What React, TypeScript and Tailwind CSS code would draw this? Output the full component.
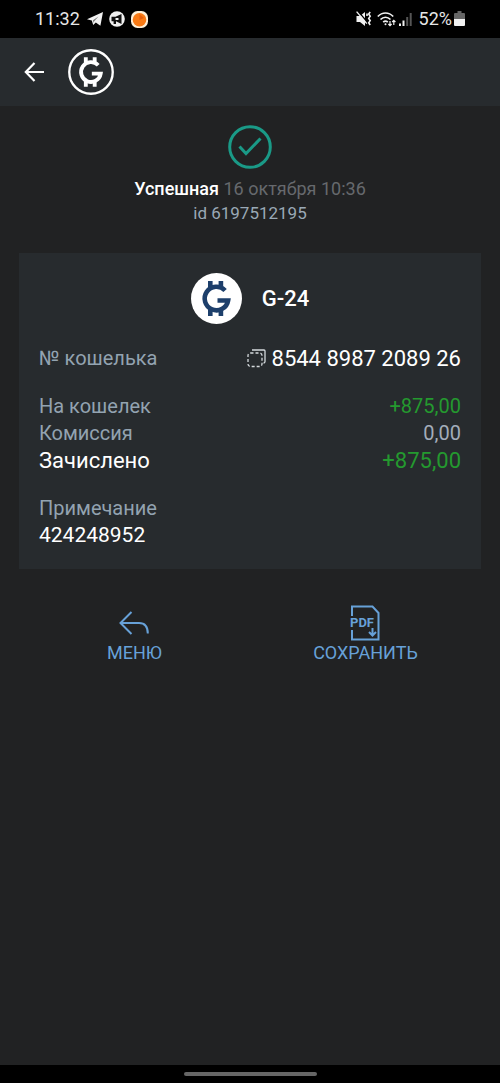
import type { ReactNode } from "react";

type Row = {
  label: string;
  value: string;
  labelClass: string;
  valueClass: string;
};

const AMOUNT_ROWS: Row[] = [
  {
    label: "На кошелек",
    value: "+875,00",
    labelClass: "text-xl/[27px] text-[#93a3b1]",
    valueClass: "text-xl/[27px] text-[#24992f]",
  },
  {
    label: "Комиссия",
    value: "0,00",
    labelClass: "text-xl/[27px] text-[#93a3b1]",
    valueClass: "text-xl/[27px] text-[#a3adba]",
  },
  {
    label: "Зачислено",
    value: "+875,00",
    labelClass: "text-[22px]/[27px] text-white",
    valueClass: "text-[22px]/[27px] text-[#24992f]",
  },
];

function BrandMark() {
  return (
    <g>
      <path
        d="M8.6 -8 A11.8 11.8 0 1 0 11.6 2 H1"
        fill="none"
        stroke="currentColor"
        strokeWidth="4.6"
      />
      <path
        d="M-8.500 -17.500h4.600v4.500h6v-4.500h4.600v7h-15.200z M-8.500 17.500h4.600v-4.500h6v4.500h4.600v-7h-15.200z"
        fill="currentColor"
      />
    </g>
  );
}

function StatusBar() {
  return (
    <div className="flex h-[38px] items-center justify-between bg-black px-[35px] text-lg text-[#e6e6e6]">
      <div className="flex items-center">
        <span>11:32</span>
        <svg className="ml-[7px] h-4 w-[17px]" viewBox="0 0 17 16" aria-hidden="true">
          <path d="M0 8.200 16 1l-2.600 13.800-4.600-3.200-2.600 2.500-1.400-4.500z" fill="#f1f1f1" />
          <path d="M6 9.300 11.500 5.500 7.200 10.200 6.500 12z" fill="#777" />
        </svg>
        <svg className="ml-[5px] size-4" viewBox="0 0 16 16" aria-hidden="true">
          <circle cx="8" cy="8" r="7.800" fill="#f1f1f1" />
          <path d="M2.500 5.800h4L12.500 3v10L7 10.300V13H4.600v-2.700H2.500z" fill="#111" />
          <path d="M6.500 7h3v2h-3z" fill="#f1f1f1" />
        </svg>
        <svg className="ml-[6px] size-[17px]" viewBox="0 0 17 17" aria-hidden="true">
          <rect width="17" height="17" rx="6.500" fill="#fff0d8" />
          <circle cx="8.500" cy="8.700" r="6.800" fill="#f97a14" />
          <path d="M8.500 3.200 13 7 8.500 9z" fill="#e65f0c" />
        </svg>
      </div>

      <div className="flex items-center">
        <svg className="size-4" viewBox="0 0 16 16" fill="none" stroke="#f1f1f1" aria-hidden="true">
          <path d="M.5 5H4l5-4v14L4 11H.5z" fill="#f1f1f1" stroke="none" />
          <path d="M1.800 0 11 10.800" stroke="#000" strokeWidth="1.400" />
          <path d="M.6.600 10.800 12.600" strokeWidth="1.400" />
          <path
            d="M11 2.500v2.500M14.200 1l-1.500 2 1.500 2.200-1.500 2.200 1.500 2.200-1.500 2.200 1.500 2.200"
            strokeWidth="1.600"
          />
        </svg>
        <svg
          className="ml-[5px] h-4 w-[19px]"
          viewBox="0 0 19 16"
          fill="none"
          stroke="#f1f1f1"
          strokeWidth="1.700"
          aria-hidden="true"
        >
          <path d="M.8 5.500c4.400-4.700 11-4.700 15.400 0M3.500 8.500c2.900-3 7.100-3 10 0M6.200 11.200c1.400-1.400 3.200-1.400 4.600 0" />
          <circle cx="8.500" cy="13.200" r="1" fill="#f1f1f1" stroke="none" />
          <path
            d="M13 10v4.500M11.400 13l1.600 1.700 1.600-1.700M16.800 14V9.500M15.200 11l1.600-1.700 1.600 1.700"
            strokeWidth="1.200"
          />
        </svg>
        <svg className="ml-[3px] h-4 w-[13px]" viewBox="0 0 13 16" aria-hidden="true">
          <path d="M0 12.500h2V15H0zM3.500 9.500h2V15h-2z" fill="#f1f1f1" />
          <path d="M7.200 6h2v9h-2zM10.700 2h2v13h-2z" fill="#555" />
        </svg>
        <span className="ml-[7px]">52%</span>
        <svg className="ml-[2px] h-4 w-[11px]" viewBox="0 0 11 16" aria-hidden="true">
          <path d="M3.500 0h4v2H10a1 1 0 0 1 1 1v5H0V3a1 1 0 0 1 1-1h2.500z" fill="#666" />
          <path d="M0 8h11v6a1 1 0 0 1-1 1H1a1 1 0 0 1-1-1z" fill="#f1f1f1" />
        </svg>
      </div>
    </div>
  );
}

function ActionButton({ label, children }: { label: string; children: ReactNode }) {
  return (
    <button type="button" className="flex flex-col items-center text-lg/6 text-[#67a1d8]">
      {children}
      <span>{label}</span>
    </button>
  );
}

export default function App() {
  return (
    <div className="flex min-h-screen flex-col bg-[#212223] font-[Roboto,sans-serif] text-white">
      <StatusBar />

      <header className="flex h-[68px] items-center bg-[#272b2e] pl-6">
        <button type="button" aria-label="Назад">
          <svg
            className="size-5"
            viewBox="0 0 20 20"
            fill="none"
            stroke="currentColor"
            strokeWidth="2.200"
            aria-hidden="true"
          >
            <path d="M20 10H1.800M10.500 1 1.800 10l8.700 9" />
          </svg>
        </button>
        <svg className="ml-6 size-[46px]" viewBox="-27.500 -27.500 55 55" aria-hidden="true">
          <circle r="26" fill="none" stroke="currentColor" strokeWidth="2.800" />
          <BrandMark />
        </svg>
      </header>

      <main className="flex-1 px-[19px] pt-[19px]">
        <section className="flex flex-col items-center">
          <svg
            className="size-11"
            viewBox="0 0 44 44"
            fill="none"
            stroke="#1a9a87"
            strokeWidth="3"
            aria-hidden="true"
          >
            <circle cx="22" cy="22" r="20.300" />
            <path d="m11.500 21.500 6.500 7L32.500 13.500" />
          </svg>
          <p className="mt-2 text-lg/6 text-[#66696d]">
            <span className="font-medium text-white">Успешная</span> 16 октября 10:36
          </p>
          <p className="text-[17px]/6 text-[#9aa9b6]">id 6197512195</p>
        </section>

        <section className="mt-7 bg-[#272b2e] p-5">
          <div className="flex items-center justify-center gap-5">
            <svg
              className="size-[51px] text-[#1d3f6b]"
              viewBox="-25.500 -25.500 51 51"
              aria-hidden="true"
            >
              <circle r="25.500" fill="#fff" />
              <BrandMark />
            </svg>
            <h1 className="text-[22px]/[27px] font-medium">G-24</h1>
          </div>

          <dl className="mt-[21px] flex items-center justify-between">
            <dt className="text-xl/[27px] text-[#93a3b1]">№ кошелька</dt>
            <dd className="flex items-center gap-[6px] text-[22px]/[27px]">
              <button type="button" aria-label="Скопировать">
                <svg
                  className="size-[19px]"
                  viewBox="0 0 19 19"
                  fill="none"
                  stroke="#d5dadd"
                  strokeWidth="1.300"
                  aria-hidden="true"
                >
                  <path d="M5 1h12a1 1 0 0 1 1 1v10.500a1.500 1.500 0 0 1-1.500 1.500" />
                  <rect
                    x="1"
                    y="4"
                    width="14"
                    height="13.500"
                    rx="2.500"
                    strokeDasharray="3 2"
                  />
                </svg>
              </button>
              8544 8987 2089 26
            </dd>
          </dl>

          <dl className="mt-[21px]">
            {AMOUNT_ROWS.map((row) => (
              <div key={row.label} className="flex justify-between">
                <dt className={row.labelClass}>{row.label}</dt>
                <dd className={row.valueClass}>{row.value}</dd>
              </div>
            ))}
          </dl>

          <dl className="mt-[21px]">
            <dt className="text-xl/[27px] text-[#93a3b1]">Примечание</dt>
            <dd className="text-[21px]/[27px]">424248952</dd>
          </dl>
        </section>

        <div className="mt-9 grid grid-cols-2 justify-items-center">
          <ActionButton label="МЕНЮ">
            <svg
              className="h-9 w-[30px]"
              viewBox="0 0 30 36"
              fill="none"
              stroke="currentColor"
              strokeWidth="2"
              aria-hidden="true"
            >
              <path d="M12.500 7 1.500 18l11 11M1.500 18H20c5.500 0 8.800 3.500 8.800 10.500" />
            </svg>
          </ActionButton>
          <ActionButton label="СОХРАНИТЬ">
            <svg
              className="h-9 w-[30px]"
              viewBox="0 0 30 36"
              fill="none"
              stroke="currentColor"
              strokeWidth="2"
              aria-hidden="true"
            >
              <path d="M2 11V1.500h20.500l6 6.500V34.500H2V25" />
              <path d="M22.500 23v7.500M19 27l3.500 3.500L26 27" />
              <text
                x="0"
                y="22"
                fontSize="13"
                fontWeight="700"
                fill="currentColor"
                stroke="none"
              >
                PDF
              </text>
            </svg>
          </ActionButton>
        </div>
      </main>

      <div className="flex h-[18px] items-center justify-center bg-black">
        <div className="h-1 w-[133px] rounded-full bg-[#666]" />
      </div>
    </div>
  );
}
